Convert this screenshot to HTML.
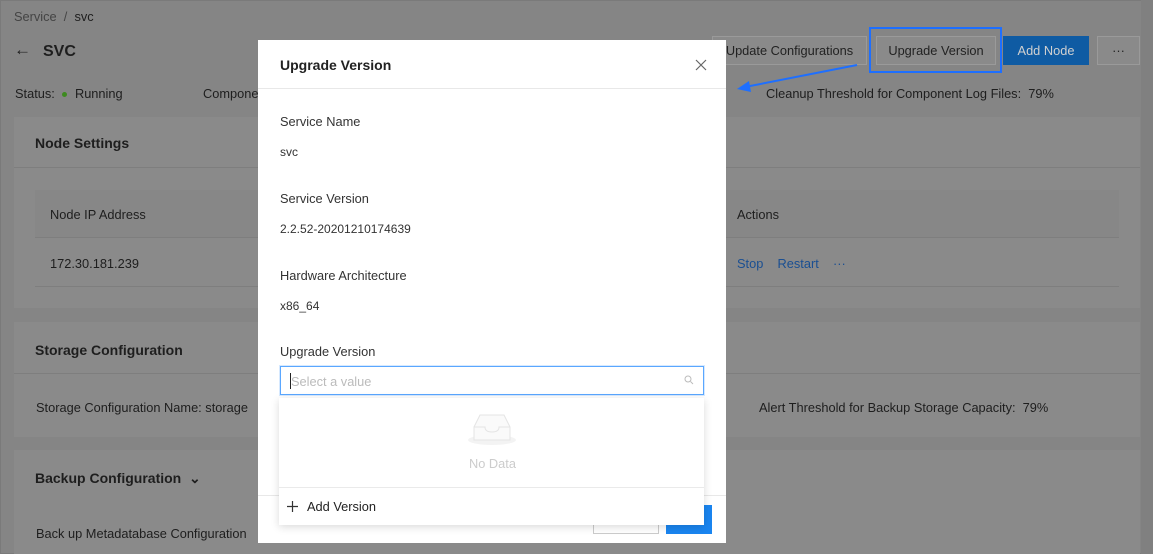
<!DOCTYPE html>
<html><head><style>
*{box-sizing:border-box;margin:0;padding:0}
body{width:1153px;height:554px;overflow:hidden;font-family:"Liberation Sans",sans-serif;background:#858585;position:relative;font-size:12.8px;color:#1e1e1e}
.a{position:absolute}
.card{position:absolute;left:14px;width:1126px;background:#8a8a8a}
.t{position:absolute;white-space:nowrap}
.btn{position:absolute;top:36px;height:29px;border:1px solid #9a9a9a;background:#8a8a8a;font-size:12.8px;line-height:27px;text-align:center;color:#222}
</style></head><body>
<div class="a" style="left:0;top:0;width:1153px;height:554px;border:1px solid #7a7a7a"></div>
<div class="a" style="left:1141px;top:0;width:12px;height:554px;background:#808080"></div>
<div class="t" style="left:14px;top:9px;color:#444">Service &nbsp;/&nbsp; <span style="color:#1e1e1e">svc</span></div>
<div class="t" style="left:14px;top:40px;font-size:17px">←</div>
<div class="t" style="left:43px;top:43px;font-size:16px;font-weight:bold">SVC</div>
<div class="t" style="left:15px;top:86px">Status: <span style="display:inline-block;width:5px;height:5px;border-radius:50%;background:#3d8a1f;vertical-align:middle;margin:0 4px"></span> Running</div>
<div class="t" style="left:203px;top:86px">Compone</div>
<div class="t" style="left:766px;top:86px">Cleanup Threshold for Component Log Files: &nbsp;79%</div>
<div class="btn" style="left:712px;width:155px">Update Configurations</div>
<div class="btn" style="left:876px;width:120px">Upgrade Version</div>
<div class="a" style="left:869px;top:27px;width:133px;height:46px;border:2px solid #1e6fff"></div>
<div class="btn" style="left:1003px;width:86px;background:#0f5ba3;border-color:#0f5ba3;color:#d0d0d0">Add Node</div>
<div class="btn" style="left:1097px;width:43px">···</div>
<svg class="a" style="left:735px;top:62px" width="125" height="30"><line x1="122" y1="3" x2="10" y2="25" stroke="#1e6fff" stroke-width="2"/><polygon points="2,27 14,19 16,30" fill="#1e6fff"/></svg>

<div class="card" style="top:117px;height:191px">
<div class="t" style="left:21px;top:18px;font-size:14px;font-weight:bold">Node Settings</div>
<div class="a" style="left:0;top:50px;width:1126px;height:1px;background:#7e7e7e"></div>
<div class="a" style="left:21px;top:73px;width:1084px;height:48px;background:#878787;border-bottom:1px solid #7e7e7e"></div>
<div class="t" style="left:36px;top:90px">Node IP Address</div>
<div class="t" style="left:723px;top:90px">Actions</div>
<div class="t" style="left:36px;top:139px">172.30.181.239</div>
<div class="t" style="left:723px;top:139px;color:#1a4f92">Stop &nbsp;&nbsp; Restart &nbsp;&nbsp; ···</div>
<div class="a" style="left:21px;top:169px;width:1084px;height:1px;background:#7e7e7e"></div>
</div>
<div class="card" style="top:322px;height:115px">
<div class="t" style="left:21px;top:20px;font-size:14px;font-weight:bold">Storage Configuration</div>
<div class="a" style="left:0;top:51px;width:1126px;height:1px;background:#7e7e7e"></div>
<div class="t" style="left:22px;top:78px">Storage Configuration Name: storage</div>
<div class="t" style="left:745px;top:78px">Alert Threshold for Backup Storage Capacity: &nbsp;79%</div>
</div>
<div class="card" style="top:450px;height:104px">
<div class="t" style="left:21px;top:20px;font-size:14px;font-weight:bold">Backup Configuration &nbsp;⌄</div>
<div class="t" style="left:22px;top:76px">Back up Metadatabase Configuration</div>
</div>

<div class="a" style="left:258px;top:40px;width:468px;height:503px;background:#fff">
<div class="t" style="left:22px;top:17px;font-size:14px;font-weight:bold;color:#222">Upgrade Version</div>
<svg class="a" style="left:437px;top:19px" width="12" height="12"><path d="M1 1L11 11M11 1L1 11" stroke="#666" stroke-width="1.2"/></svg>
<div class="a" style="left:0;top:48px;width:468px;height:1px;background:#e8e8e8"></div>
<div class="t" style="left:22px;top:74px;color:#333">Service Name</div>
<div class="t" style="left:22px;top:105px;color:#333;font-size:12px">svc</div>
<div class="t" style="left:22px;top:151px;color:#333">Service Version</div>
<div class="t" style="left:22px;top:182px;color:#333;font-size:12px">2.2.52-20201210174639</div>
<div class="t" style="left:22px;top:228px;color:#333">Hardware Architecture</div>
<div class="t" style="left:22px;top:259px;color:#333;font-size:12px">x86_64</div>
<div class="t" style="left:22px;top:304px;color:#333">Upgrade Version</div>
<div class="a" style="left:22px;top:326px;width:424px;height:29px;border:1px solid #5aa7ff;box-shadow:0 0 0 1px #d6e9ff"></div>
<div class="a" style="left:32px;top:333px;width:1px;height:16px;background:#222"></div>
<div class="t" style="left:33px;top:334px;color:#bbb">Select a value</div>
<svg class="a" style="left:426px;top:335px" width="10" height="10"><circle cx="4" cy="4" r="3" fill="none" stroke="#bbb"/><path d="M6.5 6.5L9 9" stroke="#bbb"/></svg>
<div class="a" style="left:0;top:455px;width:468px;height:1px;background:#e8e8e8"></div>
<div class="a" style="left:335px;top:465px;width:66px;height:29px;border:1px solid #ccc"></div>
<div class="a" style="left:408px;top:465px;width:46px;height:29px;background:#1a85f0"></div>
</div>
<div class="a" style="left:279px;top:398px;width:425px;height:127px;background:#fff;box-shadow:0 2px 8px rgba(0,0,0,.15)">
<svg class="a" style="left:188px;top:14px" width="50" height="35"><ellipse cx="25" cy="28" rx="24" ry="5" fill="#f3f3f3"/><path d="M7 15 L13 3 H37 L43 15 V28 H7 Z" fill="#fafafa" stroke="#e4e4e4"/><path d="M7 15 H18 Q18 20 25 20 Q32 20 32 15 H43" fill="none" stroke="#e4e4e4"/></svg>
<div class="t" style="left:190px;top:58px;color:#ccc">No Data</div>
<div class="a" style="left:0;top:89px;width:425px;height:1px;background:#eaeaea"></div>
<svg class="a" style="left:8px;top:103px" width="11" height="11"><path d="M5.5 0V11M0 5.5H11" stroke="#333" stroke-width="1.2"/></svg>
<div class="t" style="left:28px;top:101px;color:#222">Add Version</div>
</div>
</body></html>
